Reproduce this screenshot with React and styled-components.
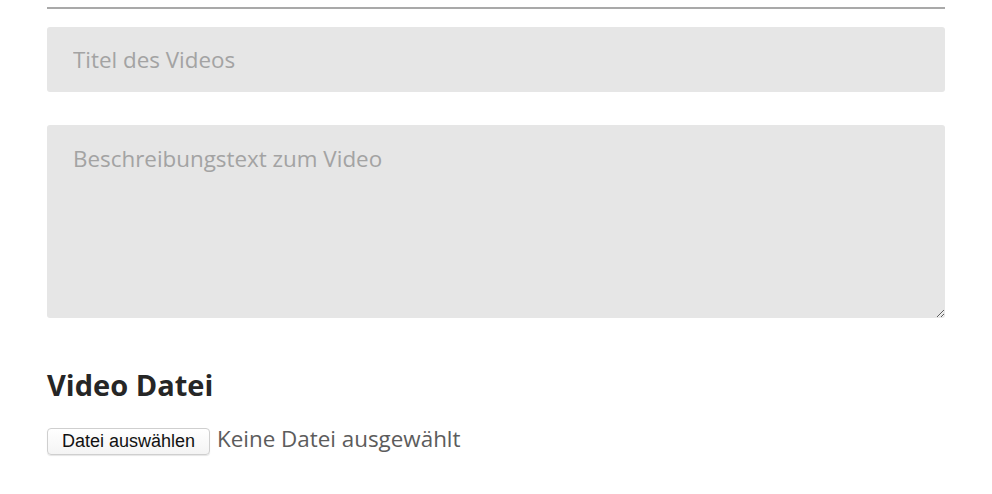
import React from "react";
import styled, { createGlobalStyle } from "styled-components";

const GlobalStyle = createGlobalStyle`
  body {
    margin: 0;
    background: #ffffff;
    font-family: "Open Sans", sans-serif;
  }
`;

const Form = styled.form`
  padding: 7px 47px 0;
  display: flex;
  flex-direction: column;
`;

const Divider = styled.hr`
  margin: 0 0 18px;
  border: 0;
  border-top: 2px solid #a9a9a9;
`;

const Field = styled.input`
  box-sizing: border-box;
  width: 100%;
  height: 65px;
  padding: 0 26px;
  border: 0;
  border-radius: 3px;
  background: #e6e6e6;
  font-family: "Open Sans", sans-serif;
  font-size: 22.4px;
  color: #333;
  outline: none;

  &::placeholder {
    color: #a3a3a3;
  }
`;

const TextArea = styled.textarea`
  box-sizing: border-box;
  width: 100%;
  height: 193px;
  margin-top: 33px;
  padding: 19px 26px;
  border: 0;
  border-radius: 3px;
  background: #e6e6e6;
  font-family: "Open Sans", sans-serif;
  font-size: 22.4px;
  line-height: 30px;
  color: #333;
  outline: none;
  resize: vertical;

  &::placeholder {
    color: #a3a3a3;
  }
`;

const Heading = styled.h2`
  margin: 47px 0 0;
  font-family: "Open Sans", sans-serif;
  font-size: 29px;
  font-weight: 700;
  line-height: 40px;
  color: #262626;
`;

const FileRow = styled.div`
  margin-top: 18px;
  display: flex;
  align-items: center;
  gap: 7px;
`;

const FileButton = styled.label`
  box-sizing: border-box;
  display: inline-flex;
  align-items: center;
  justify-content: center;
  width: 163px;
  height: 27px;
  border: 1px solid #cfcfcf;
  border-radius: 4px;
  background: linear-gradient(to bottom, #ffffff, #f4f4f4);
  box-shadow: 0 1px 1px rgba(0, 0, 0, 0.1);
  font-family: "Liberation Sans", Arial, sans-serif;
  font-size: 18px;
  color: #111;
  cursor: pointer;

  input {
    display: none;
  }
`;

const FileName = styled.span`
  padding-bottom: 5px;
  font-family: "Open Sans", sans-serif;
  font-size: 22.4px;
  line-height: 31px;
  color: #5c5c5c;
`;

export default function App() {
  return (
    <>
      <GlobalStyle />
      <Form>
        <Divider />
        <Field type="text" placeholder="Titel des Videos" />
        <TextArea placeholder="Beschreibungstext zum Video" />
        <Heading>Video Datei</Heading>
        <FileRow>
          <FileButton>
            Datei auswählen
            <input type="file" />
          </FileButton>
          <FileName>Keine Datei ausgewählt</FileName>
        </FileRow>
      </Form>
    </>
  );
}
